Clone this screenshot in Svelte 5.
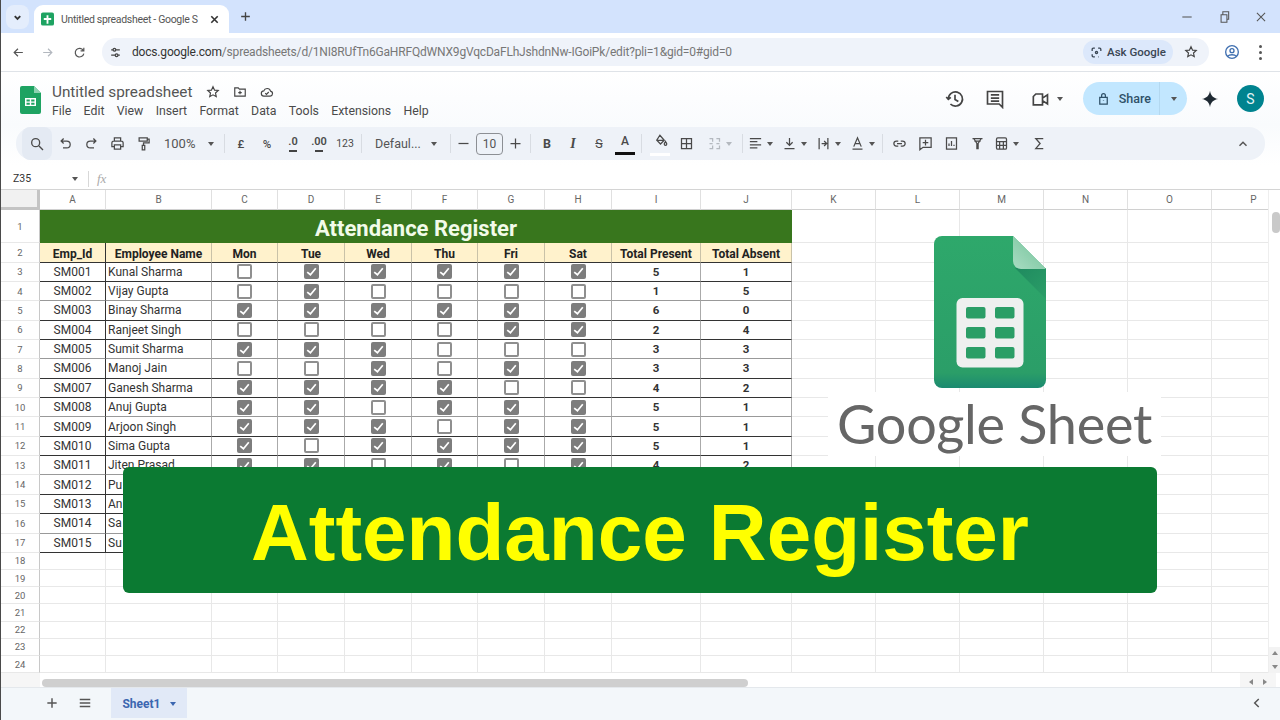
<script>
	const paths = {
		search: 'M10 4a6 6 0 1 1 0 12a6 6 0 0 1 0-12zM15 15l6 6',
		undo: 'M9 4 5 8l4 4M5 8h9a5.5 5.5 0 0 1 0 11H8',
		redo: 'M15 4l4 4-4 4M19 8h-9a5.5 5.5 0 0 0 0 11h6',
		print: 'M7 8V3h10v5M7 17H3v-6a3 3 0 0 1 3-3h12a3 3 0 0 1 3 3v6h-4M7 14h10v7H7z',
		paint: 'M5 3h13v5H5zM18 5h3v6h-9v4M10 15h4v7h-4z',
		fill: 'M11 2l7 8-6 6-6-6zM7 10h10M20 12c1 2 2 3 2 4a2 2 0 0 1-4 0c0-1 1-2 2-4z',
		borders: 'M4 4h16v16H4zM12 4v16M4 12h16',
		merge: 'M4 4h5v5M4 20h5v-5M15 4h5v5M15 20h5v-5M4 12h5M15 12h5',
		align: 'M3 4h18M3 9h12M3 14h18M3 19h12',
		valign: 'M12 3v12M7 10l5 5 5-5M4 20h16',
		wrap: 'M5 3v18M19 3v18M9 12h7M13 8l4 4-4 4',
		rotate: 'M6 17 12 3l6 14M8 12h8M4 21h16',
		link: 'M10 8H7a4 4 0 0 0 0 8h3M14 8h3a4 4 0 0 1 0 8h-3M8 12h8',
		comment: 'M3 3h18v15H8l-5 4zM12 6v9M7.500 10.500h9',
		chart: 'M4 3h16v18H4zM8 16v-4M12 16V8M16 16v-2',
		filter: 'M4 4h16M6 4l5 8v8h2v-8l5-8M7 8h10',
		func: 'M6 3h12a2 2 0 0 1 2 2v14a2 2 0 0 1-2 2H6a2 2 0 0 1-2-2V5a2 2 0 0 1 2-2zM4 9h16M9 9v12M15 9v12M4 15h16',
		sigma: 'M18 4H6l7 8-7 8h12',
		up: 'M6 15l6-6 6 6',
		star: 'M12 3l2.700 5.800 6.300.7-4.700 4.300 1.300 6.200-5.600-3.200L6.400 20l1.300-6.200L3 9.500l6.300-.7z',
		folder: 'M3 5h6l2 2h10v12H3zM12 10v6M9 13h6',
		cloud: 'M7 19a4.500 4.500 0 0 1-.5-9A6 6 0 0 1 18 10.500a4.300 4.300 0 0 1-.5 8.500zM9 14l2 2 4-4',
		history: 'M4 12a8.500 8.500 0 1 1 2.500 6M1.500 9.500 4 12.500l3-2.500M12 7v5.500l4 2.500',
		chat: 'M3 3h18v15h-0v4l-4-4H3zM7 7h10M7 11h10M7 14.500h10',
		video: 'M7 6h8v13H4V9zM15 11l6-4v11l-6-4',
		lock: 'M6 10h12v11H6zM9 10V7a3 3 0 0 1 6 0v3M12 15v1',
		back: 'M20 12H5M11 5l-7 7 7 7',
		forward: 'M4 12h15M13 5l7 7-7 7',
		reload: 'M19 8a8 8 0 1 0 1 6M20 3v6h-6',
		tune: 'M4 7h3M13 7h7M4 17h7M17 17h3M10 4.500a2.500 2.500 0 1 1 0 5a2.500 2.500 0 0 1 0-5zM14 14.500a2.500 2.500 0 1 1 0 5a2.500 2.500 0 0 1 0-5z',
		lens: 'M4 9V6a2 2 0 0 1 2-2h3M15 4h3a2 2 0 0 1 2 2v3M4 15v3a2 2 0 0 0 2 2h3M15 20h1M10 12a2 2 0 1 0 4 0a2 2 0 0 0-4 0z',
		account: 'M12 2.500a9.500 9.500 0 1 1 0 19a9.500 9.500 0 0 1 0-19zM12 7a3 3 0 1 1 0 6a3 3 0 0 1 0-6zM6 18c1.500-2.500 10.500-2.500 12 0',
		plus: 'M12 4v16M4 12h16',
		minus: 'M4 12h16',
		bars: 'M3 6h18M3 12h18M3 18h18',
		close: 'M5 5l14 14M19 5 5 19',
		restore: 'M7 8h10v13H7zM10 8V3h10v13h-3',
		left: 'M15 5l-7 7 7 7',
		down: 'M6 9l6 6 6-6'
	};

	const toolGroups = [
		[{ i: 'undo' }, { i: 'redo' }, { i: 'print' }, { i: 'paint' }, { t: '100%', cls: 'zoom', caret: true }],
		[{ t: '£', cls: 'small' }, { t: '%', cls: 'small' }, { t: '.0', cls: 'dec', i2: 'left' }, { t: '.00', cls: 'dec', i2: 'right' }, { t: '123', cls: 'num' }],
		[{ t: 'Defaul...', cls: 'font', caret: true }],
		[{ i: 'minus', cls: 'stepper first' }, { t: '10', cls: 'size' }, { i: 'plus', cls: 'stepper' }],
		[{ t: 'B', cls: 'bold' }, { t: 'I', cls: 'ital' }, { t: 'S', cls: 'strike' }, { t: 'A', cls: 'color' }],
		[{ i: 'fill', cls: 'filled' }, { i: 'borders' }, { i: 'merge', caret: true, cls: 'faded' }],
		[{ i: 'align', caret: true }, { i: 'valign', caret: true }, { i: 'wrap', caret: true }, { i: 'rotate', caret: true, cls: 'narrow' }],
		[{ i: 'link' }, { i: 'comment' }, { i: 'chart' }, { i: 'filter' }, { i: 'func', caret: true, cls: 'shifted' }, { i: 'sigma' }]
	];

	const menu = ['File', 'Edit', 'View', 'Insert', 'Format', 'Data', 'Tools', 'Extensions', 'Help'];
	const columns = ['A', 'B', 'C', 'D', 'E', 'F', 'G', 'H', 'I', 'J', 'K', 'L', 'M', 'N', 'O', 'P'];
	const heads = ['Emp_Id', 'Employee Name', 'Mon', 'Tue', 'Wed', 'Thu', 'Fri', 'Sat', 'Total Present', 'Total Absent'];

	const people = [
		['SM001', 'Kunal Sharma', '011111', 5, 1],
		['SM002', 'Vijay Gupta', '010000', 1, 5],
		['SM003', 'Binay Sharma', '111111', 6, 0],
		['SM004', 'Ranjeet Singh', '000011', 2, 4],
		['SM005', 'Sumit Sharma', '111000', 3, 3],
		['SM006', 'Manoj Jain', '001011', 3, 3],
		['SM007', 'Ganesh Sharma', '111100', 4, 2],
		['SM008', 'Anuj Gupta', '110111', 5, 1],
		['SM009', 'Arjoon Singh', '111011', 5, 1],
		['SM010', 'Sima Gupta', '101111', 5, 1],
		['SM011', 'Jiten Prasad', '110101', 4, 2],
		['SM012', 'Pu', '', '', ''],
		['SM013', 'An', '', '', ''],
		['SM014', 'Sa', '', '', ''],
		['SM015', 'Su', '', '', '']
	];

	const extraCols = [0, 1, 2, 3, 4, 5];
	const emptyRows = [18, 19, 20, 21, 22, 23, 24];
</script>

{#snippet ic(name, cls = '')}
	<svg class="ic {cls}" viewBox="0 0 24 24" fill="none" stroke="currentColor" stroke-width="2" aria-hidden="true"><path d={paths[name]} /></svg>
{/snippet}

{#snippet caret()}
	<span class="caret"></span>
{/snippet}

<div class="app">
	<div class="tabstrip">
		<div class="tabmenu">{@render ic('down')}</div>
		<div class="tab">
			<svg class="favicon" viewBox="0 0 14 14" aria-hidden="true"><rect width="14" height="14" rx="2" fill="#1ea362" /><path d="M6 3h2v3h3v2H8v4H6V8H3V6h3z" fill="#fff" /></svg>
			<span class="tabtitle">Untitled spreadsheet - Google S</span>
			{@render ic('close', 'tabclose')}
		</div>
		<div class="newtab">{@render ic('plus')}</div>
		<div class="winctl">
			<span>{@render ic('minus')}</span>
			<span>{@render ic('restore')}</span>
			<span>{@render ic('close')}</span>
		</div>
	</div>

	<div class="addressbar">
		<span class="nav">{@render ic('back')}</span>
		<span class="nav off">{@render ic('forward')}</span>
		<span class="nav">{@render ic('reload')}</span>
		<div class="omnibox">
			<span class="tune">{@render ic('tune')}</span>
			<span class="url"><b>docs.google.com</b>/spreadsheets/d/1NI8RUfTn6GaHRFQdWNX9gVqcDaFLhJshdnNw-IGoiPk/edit?pli=1&amp;gid=0#gid=0</span>
			<span class="ask">{@render ic('lens')}Ask Google</span>
			<span class="bookmark">{@render ic('star')}</span>
		</div>
		<span class="acct">{@render ic('account')}</span>
		<span class="kebab"><i></i><i></i><i></i></span>
	</div>

	<div class="docheader">
		<svg class="docicon" viewBox="0 0 21 28" aria-hidden="true">
			<path d="M2 0h12l7 7v19a2 2 0 0 1-2 2H2a2 2 0 0 1-2-2V2a2 2 0 0 1 2-2z" fill="#1ea362" />
			<path d="M14 0l7 7h-7z" fill="#8ed1b1" />
			<path d="M5 12h11v8H5z" fill="#fff" />
			<path d="M6.500 13.500h3.300v2h-3.300zM11.200 13.500h3.300v2h-3.300zM6.500 16.800h3.300v2h-3.300zM11.200 16.800h3.300v2h-3.300z" fill="#1ea362" />
		</svg>
		<div class="titleblock">
			<div class="titleline">
				<span class="doctitle">Untitled spreadsheet</span>
				{@render ic('star')}
				{@render ic('folder')}
				{@render ic('cloud')}
			</div>
			<nav class="menu">
				{#each menu as item}<span>{item}</span>{/each}
			</nav>
		</div>
		<div class="actions">
			<span class="act history">{@render ic('history')}</span>
			<span class="act chat">{@render ic('chat')}</span>
			<span class="act video">{@render ic('video')}{@render caret()}</span>
			<div class="share">
				<span class="sharemain">{@render ic('lock')}Share</span>
				<span class="sharedrop">{@render caret()}</span>
			</div>
			<svg class="spark" viewBox="0 0 24 24" aria-hidden="true"><path d="M12 1c1 6.500 4.500 10 11 11-6.500 1-10 4.500-11 11-1-6.500-4.500-10-11-11 6.500-1 10-4.500 11-11z" fill="#1f2a33" /></svg>
			<span class="avatar">S</span>
		</div>
	</div>

	<div class="toolwrap">
		<div class="toolbar">
			<div class="searchbtn">{@render ic('search')}</div>
			{#each toolGroups as group, g}
				{#if g > 0}<span class="sep"></span>{/if}
				{#each group as tool}
					<div class="tb {tool.cls ?? ''}" class:dd={tool.caret && tool.i}>
						{#if tool.i}{@render ic(tool.i)}{/if}
						{#if tool.t}<span class="tbtext">{tool.t}</span>{/if}
						{#if tool.i2}<span class="arrow {tool.i2}"></span>{/if}
						{#if tool.caret}{@render caret()}{/if}
					</div>
				{/each}
			{/each}
			<div class="collapse">{@render ic('up')}</div>
		</div>
	</div>

	<div class="formulabar">
		<span class="namebox">Z35</span>
		{@render caret()}
		<span class="fsep"></span>
		<i class="fx">fx</i>
	</div>

	<div class="sheetarea">
		<div class="grid">
			<div class="corner"></div>
			{#each columns as col}<div class="colhead">{col}</div>{/each}

			<div class="rowhead tall">1</div>
			<div class="banner-row">Attendance Register</div>
			{#each extraCols as c}<div class="blank"></div>{/each}

			<div class="rowhead">2</div>
			{#each heads as head, i}<div class="head" class:darkright={i === 0}>{head}</div>{/each}
			{#each extraCols as c}<div class="blank"></div>{/each}

			{#each people as p, r}
				<div class="rowhead">{r + 3}</div>
				<div class="cell center darkright" class:soft={r % 3 === 1}>{p[0]}</div>
				<div class="cell" class:soft={r % 3 === 1}>{p[1]}</div>
				{#each [0, 1, 2, 3, 4, 5] as d}
					<div class="cell center" class:soft={r % 3 === 1}>
						{#if p[2]}
							<span class="check" class:on={p[2][d] === '1'}>
								{#if p[2][d] === '1'}
									<svg viewBox="0 0 14 14" aria-hidden="true"><path d="M3 7.500 6 10l5-6" fill="none" stroke="#fff" stroke-width="1.600" /></svg>
								{/if}
							</span>
						{/if}
					</div>
				{/each}
				<div class="cell center total" class:soft={r % 3 === 1}>{p[3]}</div>
				<div class="cell center total" class:soft={r % 3 === 1}>{p[4]}</div>
				{#each extraCols as c}<div class="blank"></div>{/each}
			{/each}

			{#each emptyRows as n}
				<div class="rowhead">{n}</div>
				{#each columns as col}<div class="blank"></div>{/each}
			{/each}
		</div>
		<div class="vscroll">
			<div class="vthumb"></div>
			<div class="vbtns"><span class="tri up"></span><span class="tri dn"></span></div>
		</div>
	</div>

	<div class="hscroll">
		<div class="hstub"></div>
		<div class="htrack"><div class="hthumb"></div></div>
		<div class="hbtns"><span class="tri lf"></span><span class="tri rt"></span></div>
	</div>

	<div class="sheetbar">
		<span class="sbtn first">{@render ic('plus')}</span>
		<span class="sbtn">{@render ic('bars')}</span>
		<div class="sheettab">Sheet1 {@render caret()}</div>
		<span class="sbtn end">{@render ic('left')}</span>
	</div>

	<div class="logo">
		<svg class="logomark" viewBox="0 0 112 152" aria-hidden="true">
			<defs>
				<linearGradient id="body" x1="0" y1="0" x2="0" y2="1">
					<stop offset="0" stop-color="#2ea86b" />
					<stop offset="0.9" stop-color="#2b9e68" />
					<stop offset="1" stop-color="#1b8a70" />
				</linearGradient>
				<linearGradient id="foldgrad" x1="0" y1="1" x2="1" y2="0">
					<stop offset="0" stop-color="#a8dcc2" />
					<stop offset="1" stop-color="#6fc096" />
				</linearGradient>
				<linearGradient id="foldshade" x1="0" y1="0" x2="1" y2="1">
					<stop offset="0" stop-color="#1f8a5f" />
					<stop offset="1" stop-color="#2b9e68" />
				</linearGradient>
			</defs>
			<path d="M8 0H79L112 33V144a8 8 0 0 1-8 8H8a8 8 0 0 1-8-8V8a8 8 0 0 1 8-8z" fill="url(#body)" />
			<path d="M81 32 112 63V32z" fill="url(#foldshade)" />
			<path d="M79 0 112 33H87a8 8 0 0 1-8-8z" fill="url(#foldgrad)" />
			<rect x="22.500" y="62" width="67" height="69.500" rx="6" fill="#eef0ef" />
			<g fill="#2a9e66">
				<rect x="32" y="71" width="19.500" height="11.500" rx="2" />
				<rect x="61" y="71" width="19.500" height="11.500" rx="2" />
				<rect x="32" y="91" width="19.500" height="11.500" rx="2" />
				<rect x="61" y="91" width="19.500" height="11.500" rx="2" />
				<rect x="32" y="111" width="19.500" height="11.500" rx="2" />
				<rect x="61" y="111" width="19.500" height="11.500" rx="2" />
			</g>
		</svg>
		<div class="logotext">Google Sheet</div>
	</div>

	<div class="promo">Attendance Register</div>
</div>

<style>
	:global(body) {
		margin: 0;
		background: #fff;
	}

	.app {
		position: relative;
		width: 1280px;
		height: 720px;
		box-sizing: border-box;
		border-left: 1px solid #4a4a4a;
		overflow: hidden;
		display: flex;
		flex-direction: column;
		font-family: Roboto, "Liberation Sans", sans-serif;
		color: #444;
	}

	.ic {
		width: 16px;
		height: 16px;
		display: block;
		flex: none;
	}

	.caret {
		display: inline-block;
		flex: none;
		width: 0;
		height: 0;
		border-left: 3.5px solid transparent;
		border-right: 3.5px solid transparent;
		border-top: 4px solid #555;
	}

	/* browser chrome */
	.tabstrip {
		height: 33px;
		flex: none;
		background: #d3e3fd;
		display: flex;
		align-items: flex-end;
		padding-left: 5px;
	}

	.tabmenu {
		width: 23px;
		height: 24px;
		margin-bottom: 4px;
		border-radius: 8px;
		background: #e4edfc;
		display: flex;
		align-items: center;
		justify-content: center;
		color: #333;
	}

	.tabmenu .ic {
		width: 11px;
		height: 11px;
		stroke-width: 4;
	}

	.tab {
		width: 195px;
		height: 28px;
		margin-left: 5px;
		border-radius: 9px 9px 0 0;
		background: #fff;
		display: flex;
		align-items: center;
		padding-left: 7px;
		box-sizing: border-box;
	}

	.favicon {
		width: 13px;
		height: 14px;
		flex: none;
	}

	.tabtitle {
		margin-left: 7px;
		width: 135px;
		white-space: nowrap;
		font-size: 10.500px;
		letter-spacing: -0.32px;
		color: #555;
	}

	.tab :global(.tabclose) {
		width: 11px;
		height: 11px;
		margin-left: 13px;
		stroke-width: 3.500;
		color: #333;
	}

	.newtab {
		align-self: center;
		margin-left: 10px;
		color: #444;
	}

	.newtab .ic {
		width: 13px;
		height: 13px;
		stroke-width: 2.500;
	}

	.winctl {
		margin-left: auto;
		align-self: center;
		display: flex;
		gap: 23px;
		margin-right: 12px;
		color: #555;
	}

	.winctl .ic {
		width: 14px;
		height: 14px;
		stroke-width: 1.800;
	}

	.addressbar {
		height: 39px;
		flex: none;
		box-sizing: border-box;
		background: #fff;
		border-bottom: 1px solid #dfe3e8;
		display: flex;
		align-items: center;
		padding-left: 11px;
	}

	.nav {
		width: 29px;
		color: #555;
		flex: none;
	}

	.nav.off {
		color: #b3b8bf;
		width: 32px;
	}

	.nav .ic {
		width: 13px;
		height: 13px;
		stroke-width: 2.200;
	}

	.omnibox {
		width: 1107px;
		height: 28px;
		border-radius: 14px;
		background: #eff3fa;
		display: flex;
		align-items: center;
		padding-left: 6px;
		box-sizing: border-box;
		flex: none;
	}

	.tune {
		color: #444;
		margin-right: 10px;
		margin-left: 1px;
	}

	.tune .ic {
		width: 13px;
		height: 13px;
		stroke-width: 2.400;
	}

	.url {
		font-size: 12px;
		color: #777;
		white-space: nowrap;
		flex: 1;
		letter-spacing: -0.18px;
	}

	.url b {
		font-weight: 400;
		color: #333;
	}

	.ask {
		height: 24px;
		width: 90px;
		border-radius: 12px;
		background: #dce8fb;
		display: flex;
		align-items: center;
		justify-content: center;
		gap: 4px;
		font-size: 11.500px;
		font-weight: 500;
		color: #3a4654;
		box-sizing: border-box;
	}

	.ask .ic {
		width: 13px;
		height: 13px;
		stroke-width: 2.400;
	}

	.bookmark {
		margin: 0 11px;
		color: #444;
	}

	.bookmark .ic {
		width: 14px;
		height: 14px;
		stroke-width: 2;
	}

	.acct {
		margin-left: 15px;
		color: #3f6fb0;
	}

	.kebab {
		margin-left: 19px;
		display: flex;
		flex-direction: column;
		gap: 3px;
	}

	.kebab i {
		width: 3px;
		height: 3px;
		border-radius: 50%;
		background: #555;
	}

	/* docs header */
	.docheader {
		height: 53px;
		flex: none;
		background: linear-gradient(#fff, #f9fbfd);
		display: flex;
		align-items: flex-start;
		padding-left: 19px;
		box-sizing: border-box;
	}

	.docicon {
		width: 21px;
		height: 28px;
		margin-top: 14px;
		flex: none;
	}

	.titleblock {
		margin-left: 11px;
		margin-top: 9px;
	}

	.titleline {
		display: flex;
		align-items: center;
		height: 21px;
		color: #444;
	}

	.titleline .ic {
		width: 14px;
		height: 14px;
		margin-left: 13px;
		stroke-width: 2;
	}

	.doctitle {
		font-size: 15.300px;
		color: #555;
		margin-right: 1px;
	}

	.menu {
		display: flex;
		gap: 12.300px;
		margin-top: 2px;
		font-size: 12.300px;
		color: #4a4a4a;
	}

	.actions {
		margin-left: auto;
		height: 100%;
		display: flex;
		align-items: center;
		padding-right: 16px;
	}

	.act {
		color: #444;
		display: flex;
		align-items: center;
		gap: 7px;
	}

	.act .ic {
		width: 20px;
		height: 20px;
		stroke-width: 2;
	}

	.history {
		margin-right: 20px;
	}

	.chat {
		margin-right: 25px;
	}

	.video {
		margin-right: 20px;
	}

	.share {
		width: 104px;
		height: 33px;
		border-radius: 17px;
		background: #c2e7ff;
		display: flex;
		align-items: center;
		font-size: 12.500px;
		font-weight: 500;
		color: #2f5168;
	}

	.sharemain {
		width: 77px;
		display: flex;
		align-items: center;
		justify-content: flex-end;
		gap: 8px;
		padding-right: 8px;
		box-sizing: border-box;
		border-right: 1px solid #b3d8f0;
		height: 100%;
	}

	.sharemain .ic {
		width: 15px;
		height: 15px;
	}

	.sharedrop {
		flex: 1;
		display: flex;
		justify-content: center;
	}

	.spark {
		width: 18px;
		height: 18px;
		margin-left: 14px;
		flex: none;
	}

	.avatar {
		width: 27px;
		height: 27px;
		margin-left: 18px;
		border-radius: 50%;
		background: #00838f;
		color: #e6f4f5;
		font-size: 14px;
		display: flex;
		align-items: center;
		justify-content: center;
	}

	/* toolbar */
	.toolwrap {
		height: 40px;
		flex: none;
		box-sizing: border-box;
		padding: 2px 15px 5px 15px;
		background: linear-gradient(#f9fbfd, #fff);
	}

	.toolbar {
		height: 33px;
		border-radius: 16px;
		background: #eef2f8;
		display: flex;
		align-items: center;
		padding-left: 6px;
		color: #4a4a4a;
	}

	.searchbtn {
		width: 30px;
		height: 33px;
		background: #e4eaf3;
		border-radius: 8px;
		display: flex;
		align-items: center;
		justify-content: center;
		flex: none;
	}

	.tb {
		width: 26px;
		height: 26px;
		flex: none;
		display: flex;
		align-items: center;
		justify-content: center;
		position: relative;
		font-size: 11px;
	}

	.tb .ic {
		width: 15px;
		height: 15px;
	}

	.tb.dd {
		width: 34px;
		justify-content: flex-start;
		padding-left: 2px;
		box-sizing: border-box;
		gap: 4px;
	}

	.tb.dd.narrow {
		width: 31px;
	}

	.tb.dd.shifted {
		margin-left: 2px;
		width: 34px;
	}

	.tb.faded {
		color: #b4b9bf;
	}

	.tb.dd.faded {
		margin-left: 6px;
	}

	.tb.faded .caret {
		border-top-color: #b4b9bf;
	}

	.tb.zoom {
		width: 57px;
		margin-left: 8px;
		justify-content: flex-start;
		gap: 13px;
		font-size: 13px;
		color: #555;
	}

	.tb.small {
		font-weight: 500;
		font-size: 11.500px;
	}

	.tb.dec {
		font-size: 11px;
		font-weight: 600;
		padding-bottom: 5px;
		box-sizing: border-box;
	}

	.arrow {
		position: absolute;
		left: 9px;
		bottom: 5px;
		width: 8px;
		height: 1.500px;
		background: #444;
	}

	.tb.num {
		font-size: 10.500px;
	}

	.tb.font {
		width: 78px;
		margin-left: 4px;
		justify-content: flex-start;
		gap: 10px;
		font-size: 12.500px;
		color: #555;
		padding-left: 6px;
		box-sizing: border-box;
	}

	.tb.stepper {
		width: 24px;
	}

	.tb.stepper.first {
		width: 26px;
		margin-left: -4px;
	}

	.tb.size {
		width: 27px;
		height: 22px;
		border: 1px solid #8c8f94;
		border-radius: 4px;
		box-sizing: border-box;
		font-size: 12px;
		color: #555;
	}

	.tb.bold {
		font-weight: 700;
		font-size: 12.500px;
	}

	.tb.ital {
		font-style: italic;
		font-family: "Liberation Serif", serif;
		font-weight: 700;
		font-size: 14px;
	}

	.tb.strike {
		font-size: 12.500px;
		text-decoration: line-through;
	}

	.tb.color {
		font-size: 12px;
		font-weight: 500;
		padding-bottom: 6px;
		box-sizing: border-box;
	}

	.tb.color::after {
		content: "";
		position: absolute;
		left: 3px;
		right: 3px;
		bottom: 2px;
		height: 3px;
		background: #111;
	}

	.tb.filled {
		margin-left: 2px;
		padding-bottom: 4px;
		box-sizing: border-box;
	}

	.tb.filled::after {
		content: "";
		position: absolute;
		left: 3px;
		right: 3px;
		bottom: 1px;
		height: 3px;
		background: #fff;
	}

	.sep {
		width: 1px;
		height: 19px;
		background: #d8dce2;
		flex: none;
		margin: 0 3px;
	}

	.collapse {
		margin-left: auto;
		margin-right: 15px;
		color: #555;
	}

	.collapse .ic {
		width: 14px;
		height: 14px;
		stroke-width: 2.500;
	}

	/* formula bar */
	.formulabar {
		height: 25px;
		flex: none;
		box-sizing: border-box;
		border-bottom: 1px solid #d4d4d4;
		padding-top: 3px;
		display: flex;
		align-items: center;
		background: #fff;
	}

	.namebox {
		width: 71px;
		padding-left: 12px;
		box-sizing: border-box;
		font-size: 10.500px;
		color: #333;
	}

	.fsep {
		width: 1px;
		height: 16px;
		background: #d8d8d8;
		margin-left: 10px;
	}

	.fx {
		margin-left: 8px;
		font-family: "Liberation Serif", serif;
		font-size: 13px;
		color: #aaa;
	}

	/* sheet */
	.sheetarea {
		flex: 1;
		min-height: 0;
		display: flex;
		overflow: hidden;
	}

	.grid {
		display: grid;
		grid-template-columns: 39px 66px 106px 66px 67px 67px 66px 67px 67px 89px 91px 84px 84px 84px 84px 84px 84px;
		grid-template-rows: 20px 33px 19.500px repeat(15, 19.360px) repeat(7, 17.200px);
		font-size: 12px;
		color: #333;
		flex: none;
		width: 1267px;
		overflow: hidden;
	}

	.corner {
		background: #f1f1f1;
		border-right: 3px solid #c4c4c4;
		border-bottom: 3px solid #c4c4c4;
		box-sizing: border-box;
	}

	.colhead {
		display: flex;
		align-items: center;
		justify-content: center;
		font-size: 10px;
		color: #666;
		border-right: 1px solid #e0e0e0;
		border-bottom: 1px solid #d0d0d0;
		box-sizing: border-box;
	}

	.rowhead {
		display: flex;
		align-items: center;
		justify-content: center;
		font-size: 9.500px;
		color: #666;
		border-right: 1px solid #c8c8c8;
		border-bottom: 1px solid #e8e8e8;
		box-sizing: border-box;
	}

	.banner-row {
		grid-column: span 10;
		background: #38761d;
		color: #f2fbe9;
		font-size: 22px;
		font-weight: 700;
		display: flex;
		align-items: center;
		justify-content: center;
		box-sizing: border-box;
		padding-top: 4px;
	}

	.head {
		background: #fff2cc;
		font-weight: 700;
		display: flex;
		align-items: center;
		justify-content: center;
		white-space: nowrap;
		border-right: 1px solid #c9c2a8;
		border-bottom: 1px solid #333;
		box-sizing: border-box;
		font-size: 12px;
		color: #222;
		padding-top: 3px;
	}

	.cell {
		display: flex;
		align-items: center;
		padding-left: 2px;
		white-space: nowrap;
		overflow: hidden;
		background: #fff;
		border-right: 1px solid #aaa;
		border-bottom: 1px solid #333;
		box-sizing: border-box;
		font-size: 12px;
	}

	.cell.soft {
		border-bottom-color: #999;
	}

	.center {
		justify-content: center;
		padding-left: 0;
	}

	.head.darkright,
	.cell.darkright {
		border-right-color: #333;
	}

	.total {
		font-weight: 700;
		font-size: 11.500px;
	}

	.check {
		width: 15px;
		height: 15px;
		border-radius: 2px;
		border: 2px solid #8f8f8f;
		background: #fff;
		box-sizing: border-box;
		display: block;
	}

	.check.on {
		background: #7d7d7d;
		border: 0;
	}

	.check svg {
		display: block;
		width: 15px;
		height: 15px;
	}

	.blank {
		border-right: 1px solid #e8e8e8;
		border-bottom: 1px solid #e8e8e8;
		box-sizing: border-box;
	}

	.vscroll {
		flex: 1;
		position: relative;
		border-left: 1px solid #eee;
		display: flex;
		flex-direction: column;
		justify-content: flex-end;
		align-items: center;
	}

	.vthumb {
		position: absolute;
		top: 22px;
		left: 3px;
		width: 8px;
		height: 21px;
		border-radius: 4px;
		background: #c9c9c9;
	}

	.vbtns {
		display: flex;
		flex-direction: column;
		gap: 10px;
		padding-bottom: 0;
		background: #f3f3f3;
		width: 100%;
		align-items: center;
		padding-top: 4px;
		height: 26px;
		box-sizing: border-box;
	}

	.tri {
		display: block;
		width: 0;
		height: 0;
		border: 3px solid transparent;
	}

	.tri.up {
		border-bottom: 4px solid #888;
		border-top: 0;
	}

	.tri.dn {
		border-top: 4px solid #888;
		border-bottom: 0;
	}

	.tri.lf {
		border-right: 4px solid #888;
		border-left: 0;
	}

	.tri.rt {
		border-left: 4px solid #888;
		border-right: 0;
	}

	.hscroll {
		height: 15px;
		flex: none;
		display: flex;
		align-items: center;
		border-bottom: 1px solid #e4e8ec;
		box-sizing: border-box;
	}

	.hstub {
		width: 39px;
		height: 100%;
		background: #f6f6f6;
	}

	.htrack {
		flex: 1;
		padding: 5px 0 0 2px;
	}

	.hthumb {
		width: 706px;
		height: 8px;
		border-radius: 4px;
		background: #cfcfcf;
	}

	.hbtns {
		width: 36px;
		height: 100%;
		display: flex;
		align-items: center;
		justify-content: center;
		gap: 10px;
		background: #f6f6f6;
		margin-right: 4px;
		padding-top: 3px;
		box-sizing: border-box;
	}

	.sheetbar {
		height: 32px;
		flex: none;
		background: #f3f7fa;
		display: flex;
		align-items: flex-start;
		color: #555;
	}

	.sbtn {
		margin-top: 8px;
		margin-left: 18px;
		width: 15px;
	}

	.sbtn.first {
		margin-left: 44px;
	}

	.sbtn .ic {
		width: 14px;
		height: 14px;
		stroke-width: 2.500;
	}

	.sheettab {
		margin-left: 18px;
		width: 76px;
		height: 30px;
		background: #e1e9f7;
		color: #3b66b0;
		font-size: 12px;
		font-weight: 700;
		display: flex;
		align-items: center;
		justify-content: center;
		gap: 9px;
		padding-top: 2px;
		box-sizing: border-box;
	}

	.sheettab .caret {
		border-top-color: #3b66b0;
	}

	.sbtn.end {
		margin-left: auto;
		margin-right: 15px;
	}

	/* thumbnail overlays */
	.logo {
		position: absolute;
		left: 827px;
		top: 236px;
		width: 333px;
		display: flex;
		flex-direction: column;
		align-items: center;
	}

	.logomark {
		width: 112px;
		height: 152px;
		display: block;
		margin-right: 9px;
	}

	.logotext {
		width: 100%;
		margin-top: 4px;
		background: #fff;
		text-align: center;
		font-family: Lato, "Noto Sans", sans-serif;
		font-size: 54px;
		letter-spacing: -0.3px;
		line-height: 64px;
		color: #666;
		white-space: nowrap;
	}

	.promo {
		position: absolute;
		left: 122px;
		top: 467px;
		width: 1034px;
		height: 126px;
		box-sizing: border-box;
		padding-top: 5px;
		border-radius: 6px;
		background: #0b7a32;
		color: #ffff00;
		display: flex;
		align-items: center;
		justify-content: center;
		font-family: "Liberation Sans", Arial, sans-serif;
		font-weight: 700;
		font-size: 80px;
		white-space: nowrap;
	}
</style>
